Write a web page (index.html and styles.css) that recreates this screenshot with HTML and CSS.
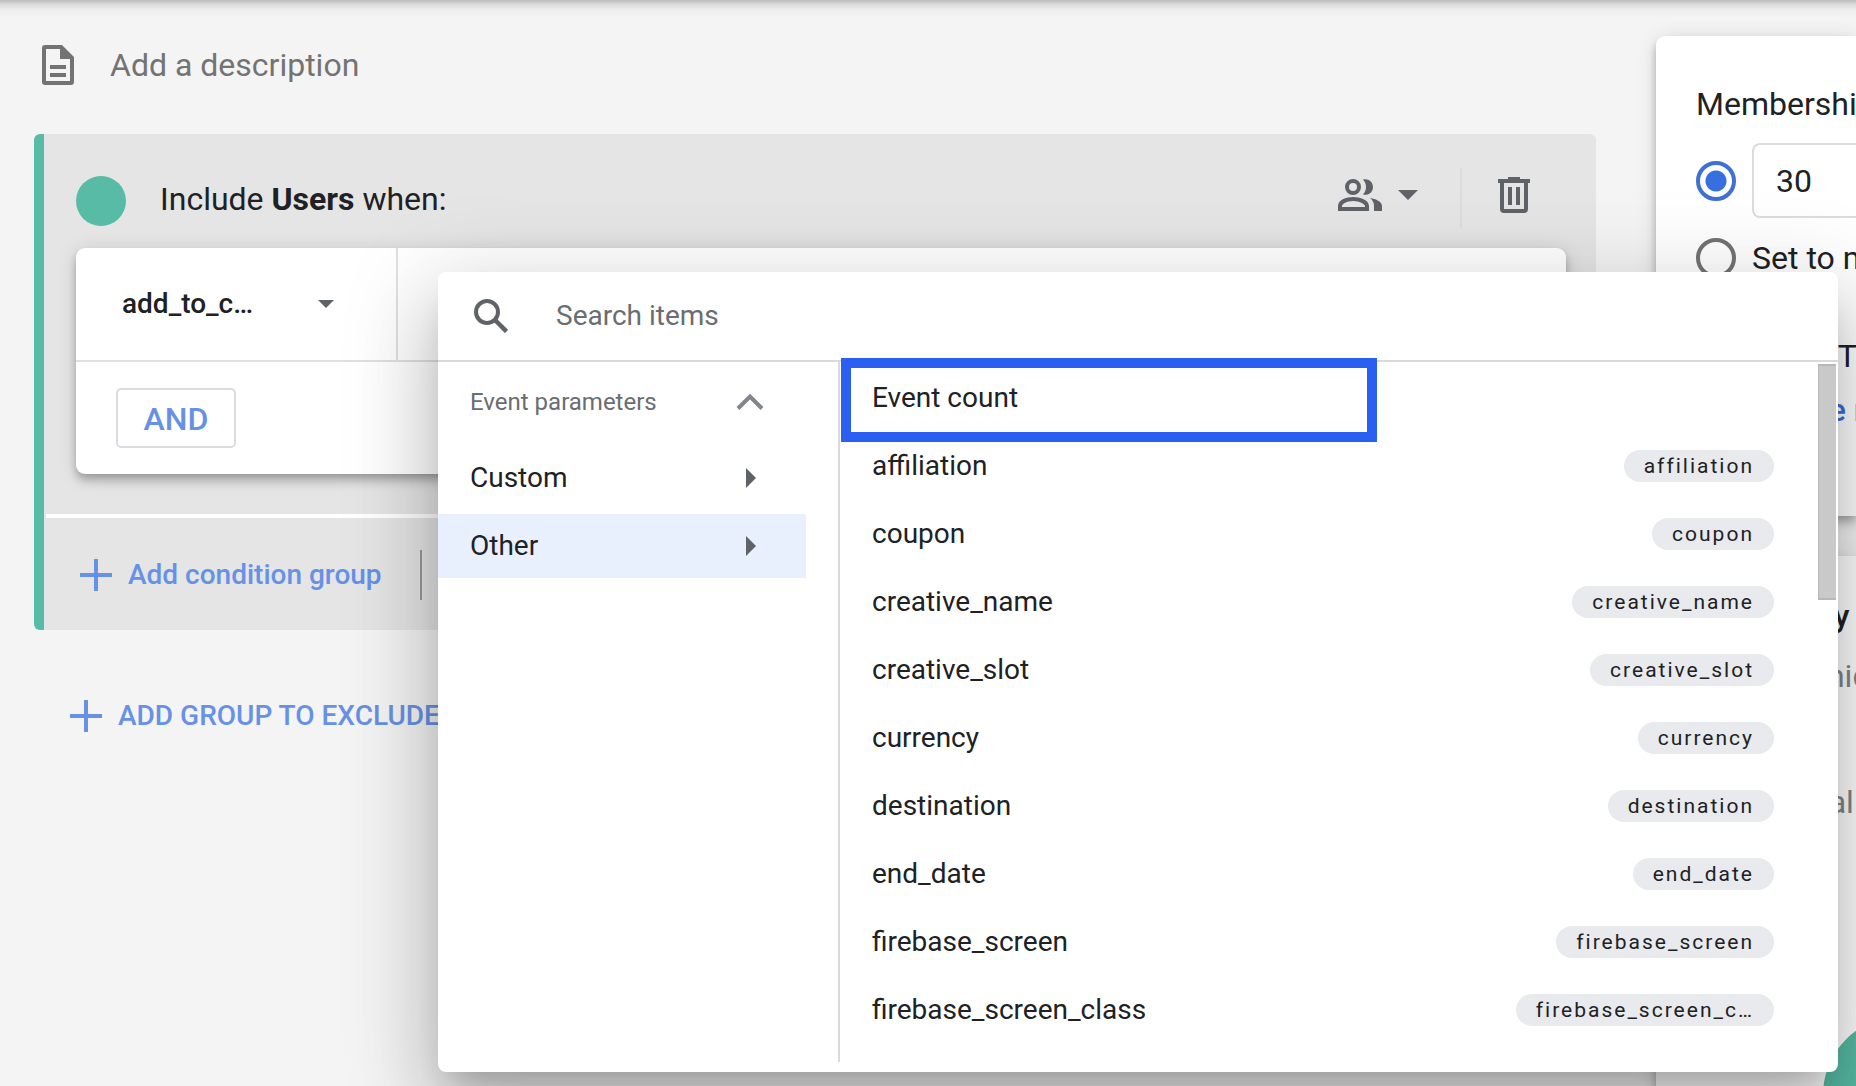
FILE: index.html
```html
<!DOCTYPE html>
<html lang="en">
<head>
<meta charset="utf-8">
<title>Audience builder</title>
<link rel="stylesheet" href="styles.css">
</head>
<body>
<div class="page">
  <main class="builder">
    <label class="description">
      <svg class="icon" width="48" height="48" viewBox="0 0 24 24" aria-hidden="true"><path fill="currentColor" d="M5.600 2H14l6 6v12.400A1.600 1.600 0 0 1 18.400 22H5.600A1.600 1.600 0 0 1 4 20.400V3.600A1.600 1.600 0 0 1 5.600 2zM6 4v16h12V9h-5V4zM8 12h8v2H8zM8 16h8v2H8z"/></svg>
      <input class="description-input" type="text" placeholder="Add a description">
    </label>

    <section class="group">
      <header class="group-header">
        <span class="dot"></span>
        <h2 class="group-title">Include <b>Users</b> when:</h2>
        <button class="scope" type="button" aria-label="Scope">
          <svg width="46" height="32" viewBox="0 0 46 32" aria-hidden="true"><path fill="currentColor" fill-rule="evenodd" d="M16 0a8 8 0 1 1 0 16 8 8 0 0 1 0-16zm0 4a4 4 0 1 0 0 8 4 4 0 0 0 0-8zM1 32v-5c0-6 8-9 15-9s16 3 16 9v5zm4-4h23v-1c0-2-6-5-12-5S5 25 5 27zM26 .500c5-1.500 10 2 10 7.500s-5 9-10 7.500c4-4 4-11 0-15zM33 19c6 1 12 3.500 12 8v5h-8v-5c0-3.500-1.500-6-4-8z"/></svg>
          <svg width="20" height="10" viewBox="0 0 20 10" aria-hidden="true"><path fill="currentColor" d="M0 0h20L10 10z"/></svg>
        </button>
        <button class="delete" type="button" aria-label="Delete group">
          <svg width="32" height="36" viewBox="0 0 32 36" aria-hidden="true"><path fill="currentColor" fill-rule="evenodd" d="M10 0h12v2h10v4h-2v26a4 4 0 0 1-4 4H6a4 4 0 0 1-4-4V6H0V2h10zM6 6v26h20V6zM10 10h4v18h-4zM18 10h4v18h-4z"/></svg>
        </button>
      </header>

      <div class="condition card">
        <div class="condition-row">
          <button class="event-picker" type="button">
            <span>add_to_c…</span>
            <svg width="16" height="8" viewBox="0 0 16 8" aria-hidden="true"><path fill="#5f6368" d="M0 0h16L8 8z"/></svg>
          </button>
        </div>
        <div class="condition-actions">
          <button class="and-button" type="button">AND</button>
        </div>
      </div>

      <footer class="group-footer">
        <button class="add-button" type="button">
          <svg width="32" height="32" viewBox="0 0 32 32" aria-hidden="true"><path fill="currentColor" d="M14 0h4v14h14v4H18v14h-4V18H0v-4h14z"/></svg>
          <span>Add condition group</span>
        </button>
        <span class="footer-divider"></span>
      </footer>
    </section>

    <button class="add-button exclude" type="button">
      <svg width="32" height="32" viewBox="0 0 32 32" aria-hidden="true"><path fill="currentColor" d="M14 0h4v14h14v4H18v14h-4V18H0v-4h14z"/></svg>
      <span>ADD GROUP TO EXCLUDE</span>
    </button>
  </main>

  <aside class="side">
    <section class="panel card">
      <h3 class="panel-title">Membership</h3>
      <div class="duration">
        <input class="radio" type="radio" name="duration" id="days" checked aria-label="Number of days">
        <input class="days" type="text" value="30" aria-label="Days">
      </div>
      <div class="duration limit">
        <input class="radio" type="radio" name="duration" id="max">
        <label for="max">Set to maximum</label>
      </div>
      <h3 class="panel-title trigger">Audience Trigger</h3>
      <a class="create" href="#"><span>+</span><span>Create new</span></a>
    </section>
    <section class="panel card summary">
      <h3 class="summary-title">Summary</h3>
      <p class="summary-note">Users: unique</p>
      <p class="summary-total">Total of all users</p>
      <svg class="chart" width="158" height="158" viewBox="0 0 158 158" aria-hidden="true"><circle cx="79" cy="79" r="79" fill="#57bba5"/></svg>
    </section>
  </aside>

  <div class="menu">
    <label class="search">
      <svg width="34" height="34" viewBox="0 0 34 34" aria-hidden="true"><circle cx="13" cy="13" r="11" fill="none" stroke="#5f6368" stroke-width="4"/><path d="M20.500 20.500l12 12" stroke="#5f6368" stroke-width="4.500"/></svg>
      <input class="search-input" type="text" placeholder="Search items">
    </label>
    <div class="menu-body">
      <nav class="categories">
        <button class="category heading" type="button">Event parameters
          <svg width="28" height="16" viewBox="0 0 28 16" aria-hidden="true"><path d="M2 14.500L14 2.500l12 12" fill="none" stroke="#80868b" stroke-width="4"/></svg>
        </button>
        <button class="category" type="button">Custom
          <svg width="10" height="20" viewBox="0 0 10 20" aria-hidden="true"><path fill="#5f6368" d="M0 0l10 10L0 20z"/></svg>
        </button>
        <button class="category selected" type="button">Other
          <svg width="10" height="20" viewBox="0 0 10 20" aria-hidden="true"><path fill="#5f6368" d="M0 0l10 10L0 20z"/></svg>
        </button>
      </nav>
      <ul class="items">
        <li class="item highlighted">Event count</li>
        <li class="item">affiliation<span class="chip">affiliation</span></li>
        <li class="item">coupon<span class="chip">coupon</span></li>
        <li class="item">creative_name<span class="chip">creative_name</span></li>
        <li class="item">creative_slot<span class="chip">creative_slot</span></li>
        <li class="item">currency<span class="chip">currency</span></li>
        <li class="item">destination<span class="chip">destination</span></li>
        <li class="item">end_date<span class="chip">end_date</span></li>
        <li class="item">firebase_screen<span class="chip">firebase_screen</span></li>
        <li class="item">firebase_screen_class<span class="chip">firebase_screen_c…</span></li>
      </ul>
      <div class="scrollbar"></div>
    </div>
  </div>
</div>
</body>
</html>
```
FILE: styles.css
```css
* { box-sizing: border-box; }

body {
  margin: 0;
  overflow: hidden;
  color: #202124;
  font: 28px/32px Roboto, "Liberation Sans", sans-serif;
}

h2, h3, p, ul { margin: 0; padding: 0; font-weight: 400; }
button, input { margin: 0; color: inherit; font: inherit; }
button { padding: 0; border: 0; background: none; text-align: left; }
input[type="text"] { min-width: 0; padding: 0; border: 0; outline: 0; background: none; }
svg { display: block; flex: none; }

.page {
  position: relative;
  display: grid;
  grid-template-columns: minmax(0, 1fr) 200px;
  column-gap: 60px;
  height: 100vh;
  overflow: hidden;
  background: linear-gradient(#bcbcbc, #dedede 5px, #efefef 11px, #f4f4f4 18px);
}

.card {
  background: #fff;
  box-shadow: 0 4px 8px -2px rgba(0, 0, 0, .2), 0 8px 10px rgba(0, 0, 0, .14), 0 2px 20px rgba(0, 0, 0, .12);
}

/* Builder column */
.builder { padding: 41px 0 0 34px; }

.description { display: flex; align-items: center; gap: 28px; height: 48px; color: #737373; }
.description-input { flex: 1; font-size: 32px; }
::placeholder { color: inherit; opacity: 1; }

.group {
  margin-top: 45px;
  border-left: 10px solid #57bba5;
  border-radius: 6px;
  background: #e5e5e5;
}

.group-header { display: flex; align-items: center; height: 114px; padding: 4px 66px 0 32px; font-size: 32px; }
.dot { width: 50px; height: 50px; margin-top: 16px; border-radius: 50%; background: #57bba5; }
.group-title { flex: 1; margin: 12px 0 0 34px; font-size: 32px; }
.scope, .delete { display: flex; align-items: center; height: 60px; margin-top: 10px; padding-bottom: 6px; color: #5f6368; }
.scope { gap: 15px; padding-right: 42px; border-right: 2px solid #dcdcdc; }
.delete { padding-left: 36px; }

.condition { margin: 0 30px 0 32px; border-radius: 9px; }
.condition-row { height: 114px; border-bottom: 2px solid #e0e0e0; }
.event-picker {
  display: flex;
  align-items: center;
  justify-content: space-between;
  width: 322px;
  height: 112px;
  padding: 0 62px 0 46px;
  border-right: 2px solid #e0e0e0;
  font-weight: 500;
}
.condition-actions { padding: 26px 40px; }
.and-button {
  width: 120px;
  height: 60px;
  padding-top: 2px;
  border: 2px solid #dadce0;
  border-radius: 5px;
  color: #6691e5;
  font-size: 32px;
  font-weight: 500;
  text-align: center;
}

.group-footer {
  display: flex;
  align-items: center;
  height: 116px;
  margin: 40px 0 0 2px;
  padding: 2px 0 0 34px;
  border-top: 4px solid #fff;
}
.add-button { display: flex; align-items: center; gap: 16px; color: #6691e5; font-weight: 500; white-space: nowrap; }
.footer-divider { width: 2px; height: 50px; margin-left: 38px; background: #999; }
.exclude { margin: 70px 0 0 36px; }

/* Side column */
.side { display: flex; flex-direction: column; gap: 40px; padding-top: 36px; white-space: nowrap; }
.panel { flex: none; padding: 52px 0 0 40px; border-radius: 9px 0 0 9px; font-size: 32px; }
.panel-title { font-size: 32px; }
.duration { display: flex; align-items: center; gap: 16px; margin-top: 23px; }
.limit { margin-top: 20px; }
.radio {
  flex: none;
  appearance: none;
  width: 40px;
  height: 40px;
  border: 4px solid #737373;
  border-radius: 50%;
}
.radio:checked { border-color: #3f70d3; background: radial-gradient(circle, #376fe0 10px, transparent 11px); }
.duration .days { flex: 1; height: 75px; padding-left: 22px; border: 2px solid #dadce0; border-right: 0; border-radius: 8px 0 0 8px; }
.trigger { margin: 62px 0 0 2px; }
.create { display: flex; gap: 38px; margin: 22px 0 90px; color: #376fe0; font-weight: 500; text-decoration: none; }
.summary { flex: 1; padding: 44px 0 0 56px; }
.summary-title { font-size: 32px; font-weight: 500; }
.summary-note { margin-top: 28px; color: #80868b; }
.summary-total { margin-top: 94px; color: #80868b; }
.chart { margin: 198px 0 0 111px; }

/* Item menu, open over both columns */
.menu {
  position: absolute;
  top: 272px;
  right: 18px;
  left: 438px;
  padding-bottom: 10px;
  border-radius: 8px;
  background: #fff;
  box-shadow: 0 22px 30px -14px rgba(0, 0, 0, .2), 0 48px 76px 6px rgba(0, 0, 0, .14), 0 18px 92px 16px rgba(0, 0, 0, .12);
}
.search {
  display: flex;
  align-items: center;
  gap: 48px;
  height: 90px;
  padding: 0 36px;
  border-bottom: 2px solid #dadada;
  color: #6a6d71;
}
.search-input { flex: 1; }

.menu-body { display: flex; }
.categories { display: flex; flex-direction: column; gap: 4px; width: 402px; padding-right: 32px; border-right: 2px solid #dadada; }
.category { display: flex; align-items: center; justify-content: space-between; height: 64px; padding: 0 50px 0 32px; }
.heading { height: 80px; padding-right: 42px; color: #6a6d71; font-size: 24px; }
.selected { background: #e8f0fd; }

.items { flex: 1; list-style: none; padding-bottom: 18px; }
.item { display: flex; align-items: center; justify-content: space-between; height: 68px; padding: 0 44px 0 32px; }
.highlighted {
  width: 536px;
  height: 84px;
  margin: -4px 0 -10px 1px;
  padding: 0 21px 4px;
  border: 10px solid #2a5ff2;
}
.chip {
  padding: 0 20px;
  border-radius: 16px;
  background: #e8eaed;
  font-size: 21px;
  letter-spacing: 2px;
}
.scrollbar { width: 18px; height: 236px; margin: 2px 2px 0 0; border: 1px solid #b8b8b8; border-width: 2px 0 2px 1px; background: #c9c9c9; }
```
